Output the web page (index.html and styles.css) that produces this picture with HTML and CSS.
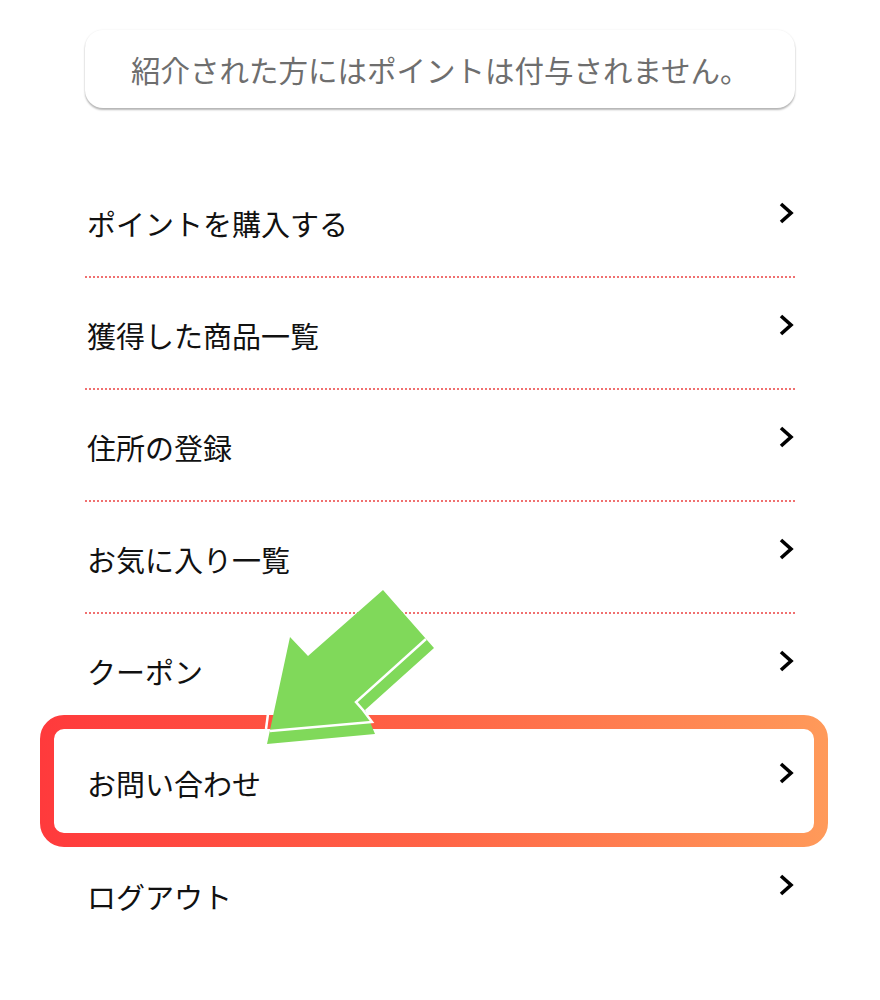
FILE: index.html
```html
<!DOCTYPE html>
<html lang="ja">
<head>
<meta charset="utf-8">
<title>メニュー</title>
<link rel="stylesheet" href="styles.css">
</head>
<body>
<div class="page">
  <div class="notice">紹介された方にはポイントは付与されません。</div>
  <ul class="menu">
    <li class="row"><span class="label">ポイントを購入する</span><svg class="chev" viewBox="0 0 16 24" width="16" height="24"><polyline points="3,3 13,12 3,21"/></svg></li>
    <li class="row"><span class="label">獲得した商品一覧</span><svg class="chev" viewBox="0 0 16 24" width="16" height="24"><polyline points="3,3 13,12 3,21"/></svg></li>
    <li class="row"><span class="label">住所の登録</span><svg class="chev" viewBox="0 0 16 24" width="16" height="24"><polyline points="3,3 13,12 3,21"/></svg></li>
    <li class="row"><span class="label">お気に入り一覧</span><svg class="chev" viewBox="0 0 16 24" width="16" height="24"><polyline points="3,3 13,12 3,21"/></svg></li>
    <li class="row"><span class="label">クーポン</span><svg class="chev" viewBox="0 0 16 24" width="16" height="24"><polyline points="3,3 13,12 3,21"/></svg></li>
    <li class="row"><span class="label">お問い合わせ</span><svg class="chev" viewBox="0 0 16 24" width="16" height="24"><polyline points="3,3 13,12 3,21"/></svg></li>
    <li class="row"><span class="label">ログアウト</span><svg class="chev" viewBox="0 0 16 24" width="16" height="24"><polyline points="3,3 13,12 3,21"/></svg></li>
  </ul>
  <svg class="annot" viewBox="0 0 880 1000" width="880" height="1000">
    <defs>
      <linearGradient id="hl" x1="40" y1="0" x2="828" y2="0" gradientUnits="userSpaceOnUse">
        <stop offset="0" stop-color="#ff3a3c"/>
        <stop offset="0.5" stop-color="#ff6446"/>
        <stop offset="1" stop-color="#ff9a5a"/>
      </linearGradient>
    </defs>
    <rect x="47" y="722" width="774" height="118" rx="17" ry="17" fill="none" stroke="url(#hl)" stroke-width="14"/>
    <line x1="268" y1="714" x2="266" y2="729" stroke="#fff" stroke-width="2.5"/>
    <polygon class="arrow" points="383,590 434,648 365,710 375,734 267,744 290,637 308,656"/>
    <polyline points="426,639 356,702 363,710 372,722 270,731" fill="none" stroke="#fff" stroke-width="2.5" stroke-linejoin="miter"/>
  </svg>
</div>
</body>
</html>
```
FILE: styles.css
```css
html, body {
  margin: 0;
  padding: 0;
  background: #ffffff;
}

body {
  font-family: "Noto Sans CJK JP", "Noto Sans", sans-serif;
  color: #111111;
}

.page {
  position: relative;
  width: 880px;
  height: 1000px;
  overflow: hidden;
  padding: 30px 85px 0 85px;
  box-sizing: border-box;
}

.notice {
  height: 78px;
  box-sizing: border-box;
  border-radius: 18px;
  background: #ffffff;
  box-shadow: 0 2px 2px rgba(0, 0, 0, 0.28), 0 0 2px rgba(0, 0, 0, 0.08);
  display: flex;
  align-items: center;
  padding-left: 46px;
  font-size: 29.5px;
  color: #6e6e6e;
}

.menu {
  list-style: none;
  margin: 58px 0 0 0;
  padding: 0;
}

.row {
  height: 112px;
  box-sizing: border-box;
  border-bottom: 2px dotted #f07070;
  display: flex;
  align-items: center;
  justify-content: space-between;
  padding: 0 0 0 2px;
}

.row:last-child {
  border-bottom: none;
}

.label {
  font-size: 29px;
  color: #111111;
  line-height: 1.4;
  margin-top: 4px;
}

.chev {
  align-self: flex-start;
  margin-top: 35px;
  margin-right: 1px;
}

.chev polyline {
  fill: none;
  stroke: #000000;
  stroke-width: 3.6;
  stroke-linejoin: miter;
  stroke-linecap: butt;
}

.annot {
  position: absolute;
  left: 0;
  top: 0;
  pointer-events: none;
}

.arrow {
  fill: #80d95a;
}
```
